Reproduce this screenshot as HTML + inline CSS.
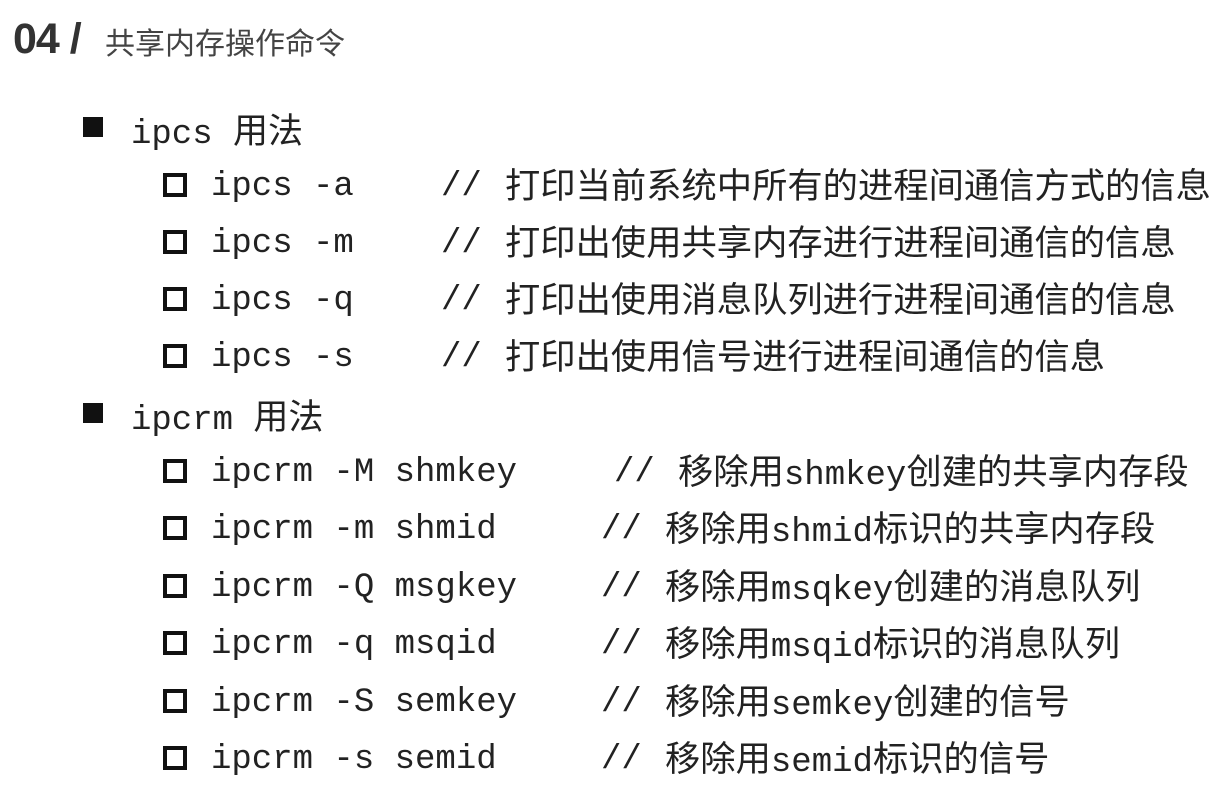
<!DOCTYPE html>
<html><head><meta charset="utf-8"><style>
body{margin:0;width:1230px;height:802px;background:#fff;position:relative;overflow:hidden;font-family:"Liberation Mono","Noto Sans CJK SC",monospace;color:#222}
.t{position:absolute;left:13px;top:15px;font:bold 43px "Liberation Sans",sans-serif;color:#333;letter-spacing:-1px}
.st{position:absolute;left:105px;top:19px;font:30px "Liberation Sans","Noto Sans CJK SC",sans-serif;color:#444}
.r{position:absolute;height:40px;line-height:40px;font-size:34px;white-space:pre}
.b{position:absolute;width:20px;height:20px;background:#111}
.h{position:absolute;width:16px;height:16px;border:4px solid #111}
.c{position:absolute;font-family:"Liberation Sans","Noto Sans CJK SC",sans-serif;font-size:35.3px;line-height:40px;height:40px;white-space:pre}
.c .m{font-family:"Liberation Mono",monospace;font-size:34px}
.k{font-family:'Noto Sans CJK SC',sans-serif;font-size:35px}
</style></head><body>
<div class="t">04 /</div><div class="st">共享内存操作命令</div>

<div class="b" style="left:83px;top:117px"></div><div class="r" style="left:131px;top:109px">ipcs <span class="k">用法</span></div>
<div class="b" style="left:83px;top:403px"></div><div class="r" style="left:131px;top:395px">ipcrm <span class="k">用法</span></div>

<div class="h" style="left:163px;top:173px"></div><div class="r" style="left:211px;top:167px">ipcs -a</div><div class="r" style="left:441px;top:167px">//</div><div class="c" style="left:505px;top:167px">打印当前系统中所有的进程间通信方式的信息</div>
<div class="h" style="left:163px;top:230px"></div><div class="r" style="left:211px;top:224px">ipcs -m</div><div class="r" style="left:441px;top:224px">//</div><div class="c" style="left:505px;top:224px">打印出使用共享内存进行进程间通信的信息</div>
<div class="h" style="left:163px;top:287px"></div><div class="r" style="left:211px;top:281px">ipcs -q</div><div class="r" style="left:441px;top:281px">//</div><div class="c" style="left:505px;top:281px">打印出使用消息队列进行进程间通信的信息</div>
<div class="h" style="left:163px;top:344px"></div><div class="r" style="left:211px;top:338px">ipcs -s</div><div class="r" style="left:441px;top:338px">//</div><div class="c" style="left:505px;top:338px">打印出使用信号进行进程间通信的信息</div>

<div class="h" style="left:163px;top:459px"></div><div class="r" style="left:211px;top:453px">ipcrm -M shmkey</div><div class="r" style="left:614px;top:453px">//</div><div class="c" style="left:678px;top:453px">移除用<span class="m">shmkey</span>创建的共享内存段</div>
<div class="h" style="left:163px;top:516px"></div><div class="r" style="left:211px;top:510px">ipcrm -m shmid</div><div class="r" style="left:601px;top:510px">//</div><div class="c" style="left:665px;top:510px">移除用<span class="m">shmid</span>标识的共享内存段</div>
<div class="h" style="left:163px;top:574px"></div><div class="r" style="left:211px;top:568px">ipcrm -Q msgkey</div><div class="r" style="left:601px;top:568px">//</div><div class="c" style="left:665px;top:568px">移除用<span class="m">msqkey</span>创建的消息队列</div>
<div class="h" style="left:163px;top:631px"></div><div class="r" style="left:211px;top:625px">ipcrm -q msqid</div><div class="r" style="left:601px;top:625px">//</div><div class="c" style="left:665px;top:625px">移除用<span class="m">msqid</span>标识的消息队列</div>
<div class="h" style="left:163px;top:689px"></div><div class="r" style="left:211px;top:683px">ipcrm -S semkey</div><div class="r" style="left:601px;top:683px">//</div><div class="c" style="left:665px;top:683px">移除用<span class="m">semkey</span>创建的信号</div>
<div class="h" style="left:163px;top:746px"></div><div class="r" style="left:211px;top:740px">ipcrm -s semid</div><div class="r" style="left:601px;top:740px">//</div><div class="c" style="left:665px;top:740px">移除用<span class="m">semid</span>标识的信号</div>
</body></html>
